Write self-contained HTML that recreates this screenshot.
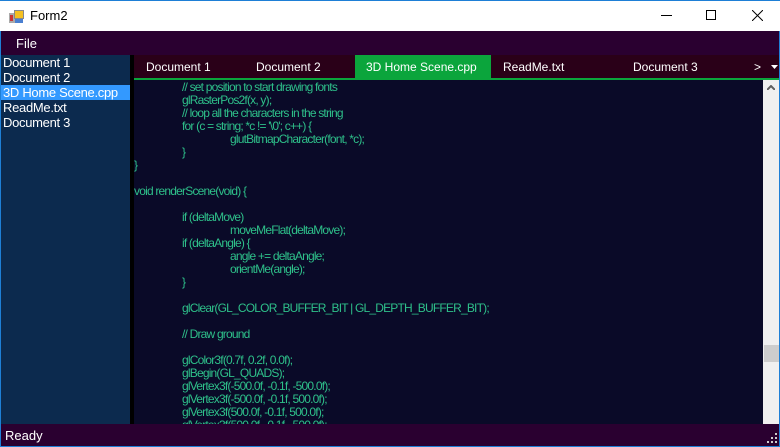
<!DOCTYPE html>
<html><head><meta charset="utf-8"><style>
*{margin:0;padding:0;box-sizing:border-box}
body{width:780px;height:447px;overflow:hidden;background:#fff;font-family:"Liberation Sans",Arial,sans-serif;position:relative}
.abs{position:absolute}
#title{left:0;top:0;width:780px;height:31px;background:#fff;border-top:1px solid #1e7fd6}
#menu{left:1px;top:31px;width:778px;height:24px;background:#2a0030;color:#fff;font-size:13px}
#list{left:1px;top:55px;width:129px;height:369px;background:#0c2a4e;color:#fff;font-size:13px;letter-spacing:-0.3px}
#list div{height:15px;line-height:15px;padding-left:2px}
#list .sel{background:#3399ff}
#gap{left:130px;top:55px;width:4px;height:369px;background:#000}
#tabs{left:134px;top:55px;width:645px;height:23px;background:#2a0018;color:#fff;font-size:12px}
#tabs span{position:absolute;top:5px}
#gline{left:134px;top:78px;width:645px;height:2px;background:#0ba53c}
#editor{left:134px;top:80px;width:629px;height:344px;background:#0a0a28;overflow:hidden}
#code{position:absolute;left:0;top:1px;width:629px;color:#2ec08a;font-size:12px;line-height:13px;white-space:nowrap;letter-spacing:-0.8px}
#code div{height:13px}
.i1{padding-left:48px}.i2{padding-left:96px}
#sb{left:763px;top:80px;width:16px;height:344px;background:#f0f0f0}
#status{left:1px;top:424px;width:778px;height:22px;background:#2a0030;color:#fff;font-size:13px}
#bot{left:0;top:446px;width:780px;height:1px;background:#1e7fd6}
#lb{left:0;top:31px;width:1px;height:416px;background:#1e7fd6}
#rb{left:779px;top:31px;width:1px;height:416px;background:#1e7fd6}
</style></head><body>
<div id="title" class="abs">
  <svg class="abs" style="left:9px;top:8px" width="16" height="15" viewBox="0 0 16 15">
    <rect x="0" y="4" width="6" height="10" fill="#aaa"/><rect x="1" y="6" width="3" height="6" fill="#c33"/>
    <rect x="5" y="1" width="10" height="9" fill="#888"/><rect x="6" y="2" width="8" height="7" fill="#f5c020"/>
    <rect x="6" y="10" width="8" height="4" fill="#4a7fd0"/>
  </svg>
  <div class="abs" style="left:30px;top:7px;font-size:13px;color:#000">Form2</div>
  <div class="abs" style="left:661px;top:14px;width:11px;height:1px;background:#000"></div>
  <div class="abs" style="left:706px;top:9px;width:10px;height:10px;border:1px solid #000"></div>
  <svg class="abs" style="left:752px;top:9px" width="11" height="11"><path d="M0 0L11 11M11 0L0 11" stroke="#000" stroke-width="1"/></svg>
</div>
<div id="lb" class="abs"></div><div id="rb" class="abs"></div>
<div id="menu" class="abs"><span class="abs" style="left:15px;top:5px">File</span></div>
<div id="list" class="abs">
  <div>Document 1</div><div>Document 2</div><div class="sel">3D Home Scene.cpp</div><div>ReadMe.txt</div><div>Document 3</div>
</div>
<div id="gap" class="abs"></div>
<div id="tabs" class="abs">
  <span style="left:12px">Document 1</span>
  <span style="left:122px">Document 2</span>
  <div class="abs" style="left:221px;top:0;width:136px;height:23px;background:#0ba53c"></div>
  <span style="left:232px">3D Home Scene.cpp</span>
  <span style="left:369px">ReadMe.txt</span>
  <span style="left:499px">Document 3</span>
  <span style="left:620px">&gt;</span>
  <svg class="abs" style="left:637px;top:10px" width="7" height="4"><path d="M0 0H7L3.5 4Z" fill="#fff"/></svg>
</div>
<div id="gline" class="abs"></div>
<div id="editor" class="abs"><div id="code"><div class="i1">// set position to start drawing fonts</div><div class="i1">glRasterPos2f(x, y);</div><div class="i1">// loop all the characters in the string</div><div class="i1">for (c = string; *c != '\0'; c++) {</div><div class="i2">glutBitmapCharacter(font, *c);</div><div class="i1">}</div><div>}</div><div></div><div>void renderScene(void) {</div><div></div><div class="i1">if (deltaMove)</div><div class="i2">moveMeFlat(deltaMove);</div><div class="i1">if (deltaAngle) {</div><div class="i2">angle += deltaAngle;</div><div class="i2">orientMe(angle);</div><div class="i1">}</div><div></div><div class="i1">glClear(GL_COLOR_BUFFER_BIT | GL_DEPTH_BUFFER_BIT);</div><div></div><div class="i1">// Draw ground</div><div></div><div class="i1">glColor3f(0.7f, 0.2f, 0.0f);</div><div class="i1">glBegin(GL_QUADS);</div><div class="i1">glVertex3f(-500.0f, -0.1f, -500.0f);</div><div class="i1">glVertex3f(-500.0f, -0.1f, 500.0f);</div><div class="i1">glVertex3f(500.0f, -0.1f, 500.0f);</div><div class="i1">glVertex3f(500.0f, -0.1f, -500.0f);</div></div></div>
<div id="sb" class="abs">
  <svg class="abs" style="left:4px;top:5px" width="8" height="5"><path d="M0 5L4 1L8 5" stroke="#606060" stroke-width="2" fill="none"/></svg>
  <div class="abs" style="left:1px;top:265px;width:15px;height:17px;background:#cdcdcd"></div>
</div>
<div id="status" class="abs"><span class="abs" style="left:4px;top:4px">Ready</span>
  <svg class="abs" style="left:765px;top:9px" width="12" height="11"><g fill="#ccc"><rect x="9" y="0" width="2" height="2"/><rect x="5" y="4" width="2" height="2"/><rect x="9" y="4" width="2" height="2"/><rect x="1" y="8" width="2" height="2"/><rect x="5" y="8" width="2" height="2"/><rect x="9" y="8" width="2" height="2"/></g></svg>
</div>
<div id="bot" class="abs"></div>
</body></html>
